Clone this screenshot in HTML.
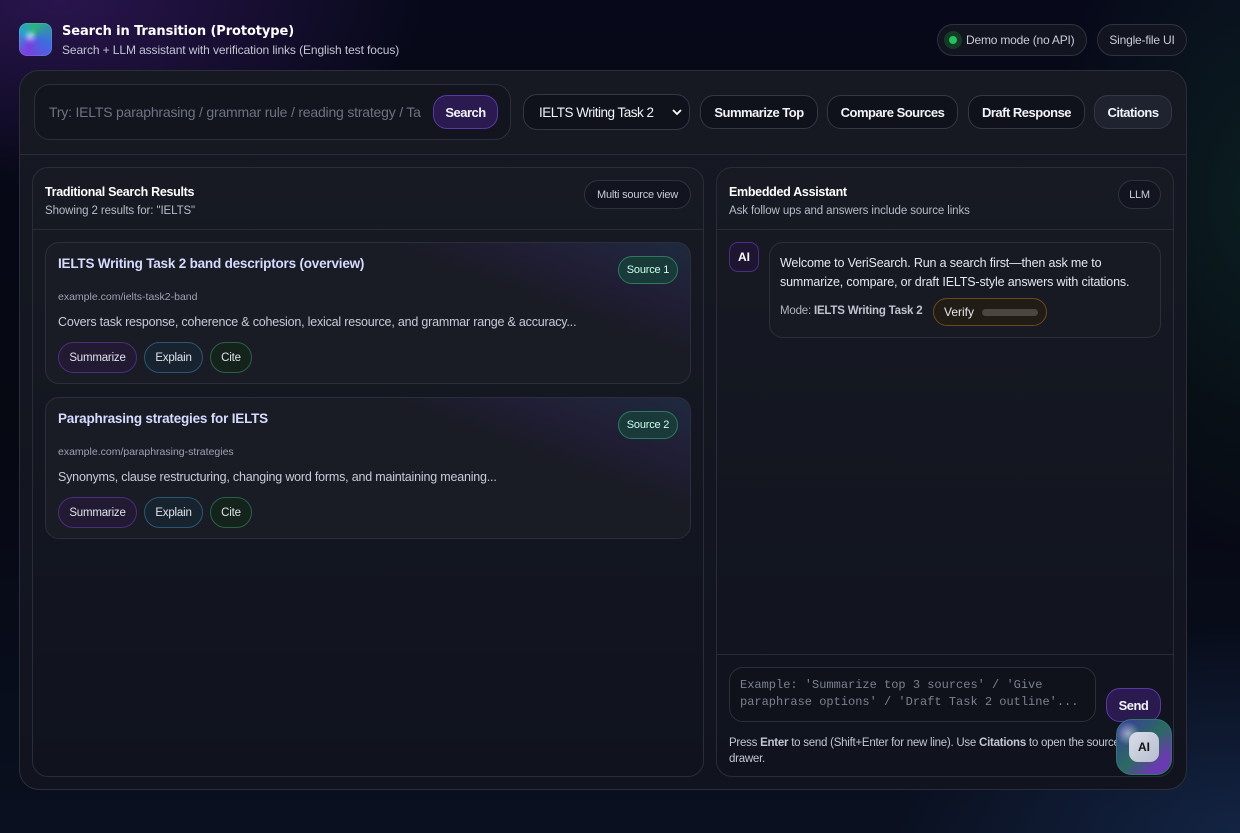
<!DOCTYPE html>
<html><head><meta charset="utf-8"><style>
*{box-sizing:border-box;margin:0;padding:0}
body{width:1240px;height:833px;overflow:hidden;font-family:"Liberation Sans",sans-serif;color:#e6e8ef;
background:radial-gradient(ellipse 520px 260px at 60px 0px,rgba(70,30,120,.55),transparent 70%),
radial-gradient(ellipse 300px 500px at 1260px 200px,rgba(20,70,50,.35),transparent 70%),
radial-gradient(ellipse 500px 300px at 1240px 833px,rgba(30,60,110,.45),transparent 70%),
linear-gradient(180deg,#07091a 0%,#060812 50%,#0a1020 100%);position:relative}
.abs{position:absolute}
.logo{left:19px;top:23px;width:33px;height:33px;border-radius:8px;background:conic-gradient(from 200deg at 40% 40%,#7b3fe0,#2aa0d0,#2bb37a,#3c6ee0,#7b3fe0);box-shadow:inset 0 0 0 1px rgba(255,255,255,.1)}
.logo:after{content:"";position:absolute;left:7px;top:9px;width:9px;height:9px;border-radius:50%;background:rgba(255,255,255,.5);filter:blur(2px)}
.t1{left:62px;top:24px;font-family:"DejaVu Sans",sans-serif;font-weight:bold;font-size:13px;color:#fff;letter-spacing:-.1px}
.t2{left:62px;top:43px;font-size:12px;color:#c3c6d3;letter-spacing:-.1px}
.pill{border:1px solid #2e3240;border-radius:16px;background:#121520;color:#c9ccd8;font-size:12px;letter-spacing:-.2px;display:flex;align-items:center;justify-content:center}
.main{left:19px;top:70px;width:1168px;height:720px;border:1px solid #2c2f3b;border-radius:20px;background:linear-gradient(180deg,#161922,#11141f)}
.sbox{left:34px;top:84px;width:477px;height:56px;border:1px solid #2c2f3b;border-radius:16px;background:#12151e}
.btn{border:1px solid #333746;border-radius:14px;background:#0f121b;color:#f2f3f7;font-weight:bold;font-size:13px;display:flex;align-items:center;justify-content:center;letter-spacing:-.5px}
.panel{border:1px solid #2a2d39;border-radius:16px;background:linear-gradient(180deg,#171a23,#10131e)}
.h{font-weight:bold;font-size:12.5px;color:#fff;letter-spacing:-.3px}
.sub{font-size:11.5px;color:#b9bcc9;letter-spacing:-.1px}
.card{left:45px;width:646px;height:142px;border:1px solid #2c2f3b;border-radius:14px;background:linear-gradient(200deg,rgba(40,70,110,.35) 0%,rgba(50,35,90,.3) 18%,transparent 30%),#191b25;overflow:hidden}
.card .ct{position:absolute;left:12px;top:13px;font-weight:bold;font-size:13.5px;color:#d6dcff;letter-spacing:-.2px}
.card .u{position:absolute;left:12px;top:48px;font-size:10.5px;color:#9ea2b3}
.card .d{position:absolute;left:12px;top:72px;font-size:12.5px;color:#c9ccd8;letter-spacing:-.2px}
.card .src{position:absolute;left:572px;top:13px;width:60px;height:28px;border:1px solid #2c7a5e;border-radius:14px;background:#1a3a3a;color:#cfe;font-size:11px;display:flex;align-items:center;justify-content:center;letter-spacing:-.2px}
.ab{position:absolute;top:99px;height:31px;border-radius:16px;font-size:11.5px;letter-spacing:-.2px;color:#e0e2ea;display:flex;align-items:center;justify-content:center}
.ab1{left:12px;width:79px;border:1px solid #4a2f7a;background:#221933}
.ab2{left:98px;width:59px;border:1px solid #2c5573;background:#172430}
.ab3{left:164px;width:42px;border:1px solid #2b6045;background:#14241d}
</style></head><body>
<div class="abs logo"></div>
<div class="abs t1">Search in Transition (Prototype)</div>
<div class="abs t2">Search + LLM assistant with verification links (English test focus)</div>
<div class="abs pill" style="left:937px;top:24px;width:150px;height:32px;justify-content:flex-start;padding-left:6px"><span style="width:18px;height:18px;border-radius:50%;background:#143a25;display:flex;align-items:center;justify-content:center;margin-right:4px"><span style="width:8px;height:8px;border-radius:50%;background:#25c060"></span></span>Demo mode (no API)</div>
<div class="abs pill" style="left:1097px;top:24px;width:90px;height:32px">Single-file UI</div>

<div class="abs main"></div>
<div class="abs sbox"></div>
<div class="abs" style="left:49px;top:104px;font-size:14px;color:#6e7282;width:372px;overflow:hidden;white-space:nowrap;letter-spacing:-.2px">Try: IELTS paraphrasing / grammar rule / reading strategy / Task 2</div>
<div class="abs btn" style="left:433px;top:95px;width:65px;height:34px;background:#2b1a4f;border-color:#5a38a6">Search</div>
<div class="abs btn" style="left:523px;top:94px;width:167px;height:36px;font-weight:normal;font-size:13.5px;justify-content:flex-start;padding-left:15px">IELTS Writing Task 2<span style="position:absolute;right:6px;top:11px"><svg width="12" height="12" viewBox="0 0 12 12"><path d="M2 4l4 4 4-4" stroke="#fff" stroke-width="1.8" fill="none"/></svg></span></div>
<div class="abs btn" style="left:700px;top:95px;width:118px;height:34px">Summarize Top</div>
<div class="abs btn" style="left:827px;top:95px;width:131px;height:34px">Compare Sources</div>
<div class="abs btn" style="left:968px;top:95px;width:117px;height:34px">Draft Response</div>
<div class="abs btn" style="left:1094px;top:95px;width:78px;height:34px;background:#1f2330">Citations</div>
<div class="abs" style="left:20px;top:154px;width:1166px;height:1px;background:#2a2d38"></div>

<div class="abs panel" style="left:32px;top:167px;width:672px;height:610px"></div>
<div class="abs h" style="left:45px;top:185px">Traditional Search Results</div>
<div class="abs sub" style="left:45px;top:205px">Showing 2 results for: "IELTS"</div>
<div class="abs pill" style="left:584px;top:180px;width:107px;height:29px;font-size:11px">Multi source view</div>
<div class="abs" style="left:33px;top:229px;width:670px;height:1px;background:#2a2d38"></div>

<div class="abs card" style="top:242px"><div class="ct">IELTS Writing Task 2 band descriptors (overview)</div><div class="u">example.com/ielts-task2-band</div><div class="d">Covers task response, coherence &amp; cohesion, lexical resource, and grammar range &amp; accuracy...</div><div class="src">Source 1</div><div class="ab ab1">Summarize</div><div class="ab ab2">Explain</div><div class="ab ab3">Cite</div></div>
<div class="abs card" style="top:397px"><div class="ct">Paraphrasing strategies for IELTS</div><div class="u">example.com/paraphrasing-strategies</div><div class="d">Synonyms, clause restructuring, changing word forms, and maintaining meaning...</div><div class="src">Source 2</div><div class="ab ab1">Summarize</div><div class="ab ab2">Explain</div><div class="ab ab3">Cite</div></div>

<div class="abs panel" style="left:716px;top:167px;width:458px;height:610px"></div>
<div class="abs h" style="left:729px;top:185px">Embedded Assistant</div>
<div class="abs sub" style="left:729px;top:205px">Ask follow ups and answers include source links</div>
<div class="abs pill" style="left:1118px;top:180px;width:43px;height:29px;font-size:11px">LLM</div>
<div class="abs" style="left:717px;top:229px;width:456px;height:1px;background:#2a2d38"></div>
<div class="abs" style="left:729px;top:242px;width:30px;height:30px;border-radius:9px;background:#1e1533;border:1px solid #4a2f7a;font-weight:bold;font-size:12px;color:#fff;display:flex;align-items:center;justify-content:center">AI</div>
<div class="abs" style="left:769px;top:242px;width:392px;height:96px;border:1px solid #2c2f3b;border-radius:14px;background:#171a23"></div>
<div class="abs" style="left:780px;top:254px;font-size:12.5px;line-height:19px;color:#e6e8ef;width:375px;letter-spacing:-.15px">Welcome to VeriSearch. Run a search first—then ask me to summarize, compare, or draft IELTS-style answers with citations.</div>
<div class="abs" style="left:780px;top:305px;font-size:11.5px;color:#b0b3c0;letter-spacing:-.2px">Mode: <b style="color:#c0c3d0">IELTS Writing Task 2</b></div>
<div class="abs" style="left:933px;top:298px;width:114px;height:28px;border:1px solid #6a4a1e;border-radius:14px;background:#221c16;font-size:12px;color:#e6e8ef;display:flex;align-items:center;padding-left:10px">Verify<span style="margin-left:8px;width:56px;height:7px;border-radius:4px;background:#4a4742"></span></div>
<div class="abs" style="left:717px;top:654px;width:456px;height:1px;background:#2a2d38"></div>
<div class="abs" style="left:729px;top:667px;width:367px;height:55px;border:1px solid #2c2f3b;border-radius:14px;background:#0f121b"></div>
<div class="abs" style="left:740px;top:677px;font-family:'Liberation Mono',monospace;font-size:12px;line-height:17px;color:#7c8090;width:350px">Example: 'Summarize top 3 sources' / 'Give paraphrase options' / 'Draft Task 2 outline'...</div>
<div class="abs btn" style="left:1106px;top:688px;width:55px;height:34px;background:#2b1a4f;border-color:#5a38a6">Send</div>
<div class="abs" style="left:729px;top:735px;font-size:11.5px;line-height:16px;color:#c3c6d3;width:392px;letter-spacing:-.25px">Press <b>Enter</b> to send (Shift+Enter for new line). Use <b>Citations</b> to open the source drawer.</div>
<div class="abs" style="left:1116px;top:719px;width:56px;height:56px;border-radius:16px;border:1px solid #2f7a70;background:radial-gradient(circle at 20% 25%,rgba(255,255,255,.5),transparent 20%),linear-gradient(135deg,#3a3aa0 0%,#2b6a60 50%,#6a3ab0 80%);display:flex;align-items:center;justify-content:center"><div style="width:30px;height:30px;border-radius:9px;background:linear-gradient(135deg,#d8dde8,#b8bed0);color:#111;font-weight:bold;font-size:12px;display:flex;align-items:center;justify-content:center">AI</div></div>
</body></html>
